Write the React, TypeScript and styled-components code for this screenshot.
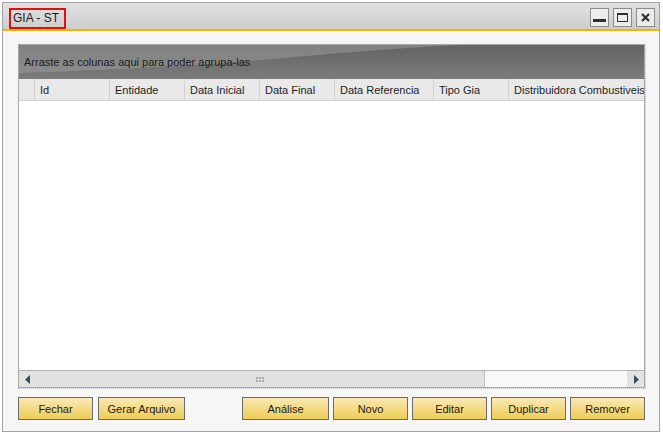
import React from "react";
import styled, { createGlobalStyle } from "styled-components";

const GlobalStyle = createGlobalStyle`
  html, body {
    margin: 0;
    padding: 0;
    background: #ffffff;
    font-family: "Liberation Sans", Arial, sans-serif;
    font-size: 11px;
    color: #1e1e1e;
  }
`;

interface Column {
  title: string;
  width: number;
}

const columns: Column[] = [
  { title: "Id", width: 75 },
  { title: "Entidade", width: 75 },
  { title: "Data Inicial", width: 75 },
  { title: "Data Final", width: 75 },
  { title: "Data Referencia", width: 99 },
  { title: "Tipo Gia", width: 75 },
  { title: "Distribuidora Combustiveis", width: 135 },
];

const leftButtons = [
  { label: "Fechar", width: 75 },
  { label: "Gerar Arquivo", width: 87 },
];

const rightButtons = [
  { label: "Análise", width: 87 },
  { label: "Novo", width: 75 },
  { label: "Editar", width: 75 },
  { label: "Duplicar", width: 75 },
  { label: "Remover", width: 75 },
];

export default function App() {
  return (
    <>
      <GlobalStyle />
      <Window>
        <TitleBar>
          <TitleBox>GIA - ST</TitleBox>
          <WindowControls>
            <ControlButton>
              <svg width="13" height="13" viewBox="0 0 13 13">
                <rect x="0" y="8" width="13" height="3" fill="#303030" />
              </svg>
            </ControlButton>
            <ControlButton>
              <svg width="13" height="13" viewBox="0 0 13 13">
                <rect x="1.5" y="2.5" width="10" height="8" fill="none" stroke="#303030" strokeWidth="1" />
                <rect x="1" y="2" width="11" height="2" fill="#303030" />
              </svg>
            </ControlButton>
            <ControlButton>
              <svg width="13" height="13" viewBox="0 0 13 13">
                <path d="M3 3 L10 10 M10 3 L3 10" stroke="#303030" strokeWidth="2.2" />
              </svg>
            </ControlButton>
          </WindowControls>
        </TitleBar>
        <AccentLine />
        <Body>
          <GridFrame>
            <Grid>
              <GroupPanel>
                <GroupWave viewBox="0 0 625 34" preserveAspectRatio="none">
                  <path d="M0 0 H440 C 360 4 300 10 230 16 C 150 22 60 26 0 28 Z" fill="#9a9a9a" opacity="0.55" />
                </GroupWave>
                <GroupText>Arraste as colunas aqui para poder agrupa-las</GroupText>
              </GroupPanel>
              <HeaderRow>
                <IndicatorCell />
                {columns.map((col) => (
                  <HeaderCell key={col.title} $width={col.width}>
                    {col.title}
                  </HeaderCell>
                ))}
              </HeaderRow>
              <Rows />
              <ScrollBar>
                <ArrowButton>
                  <svg width="6" height="9" viewBox="0 0 6 9">
                    <path d="M5 0 L0 4.5 L5 9 Z" fill="#3d4b59" />
                  </svg>
                </ArrowButton>
                <Thumb>
                  <svg width="9" height="5" viewBox="0 0 9 5">
                    {[0, 3, 6].map((x) =>
                      [0, 3].map((y) => (
                        <rect key={`${x}-${y}`} x={x} y={y} width="2" height="2" fill="#a8a8a8" />
                      ))
                    )}
                  </svg>
                </Thumb>
                <Track />
                <ArrowButton>
                  <svg width="6" height="9" viewBox="0 0 6 9">
                    <path d="M1 0 L6 4.5 L1 9 Z" fill="#3d4b59" />
                  </svg>
                </ArrowButton>
              </ScrollBar>
            </Grid>
          </GridFrame>
          <ButtonRow>
            <ButtonGroup $gap={5}>
              {leftButtons.map((b) => (
                <ActionButton key={b.label} $width={b.width}>
                  {b.label}
                </ActionButton>
              ))}
            </ButtonGroup>
            <ButtonGroup $gap={4}>
              {rightButtons.map((b) => (
                <ActionButton key={b.label} $width={b.width}>
                  {b.label}
                </ActionButton>
              ))}
            </ButtonGroup>
          </ButtonRow>
        </Body>
      </Window>
    </>
  );
}

const Window = styled.div`
  margin: 2px 0 0 2px;
  width: 658px;
  height: 430px;
  box-sizing: border-box;
  border: 1px solid #a2a2a2;
  display: flex;
  flex-direction: column;
  background: #f6f6f6;
`;

const TitleBar = styled.div`
  height: 26px;
  display: flex;
  align-items: center;
  justify-content: space-between;
  padding: 0 4px 0 6px;
  background: linear-gradient(to bottom, #e2e2e2, #cdcdcd);
`;

const TitleBox = styled.div`
  box-sizing: border-box;
  height: 21px;
  width: 57px;
  margin-top: 4px;
  border: 2px solid #e01010;
  font-size: 12px;
  line-height: 17px;
  padding-left: 2px;
  color: #1a1a1a;
  white-space: nowrap;
`;

const WindowControls = styled.div`
  display: flex;
  gap: 4px;
  margin-top: 3px;
`;

const ControlButton = styled.div`
  width: 19px;
  height: 19px;
  box-sizing: border-box;
  border: 1px solid #8c8c8c;
  background: #ececec;
  display: flex;
  align-items: center;
  justify-content: center;
`;

const AccentLine = styled.div`
  height: 2px;
  background: #f5b400;
`;

const Body = styled.div`
  flex: 1;
  display: flex;
  flex-direction: column;
  padding: 13px 13px 0 15px;
  background: #f6f6f6;
`;

const GridFrame = styled.div`
  height: 345px;
  box-sizing: border-box;
  border-right: 1px dotted #bcbcbc;
  border-bottom: 1px dotted #bcbcbc;
  display: flex;
`;

const Grid = styled.div`
  flex: 1;
  display: flex;
  flex-direction: column;
  box-sizing: border-box;
  border: 1px solid #a8a8a8;
  background: #ffffff;
`;

const GroupPanel = styled.div`
  position: relative;
  height: 34px;
  background: linear-gradient(to bottom, #636363, #7c7c7c);
  display: flex;
  align-items: center;
  overflow: hidden;
`;

const GroupWave = styled.svg`
  position: absolute;
  left: 0;
  top: 0;
  width: 100%;
  height: 100%;
`;

const GroupText = styled.span`
  position: relative;
  margin: 0 0 0 5px;
  color: #1c1c1c;
  font-size: 11px;
`;

const HeaderRow = styled.div`
  height: 22px;
  display: flex;
  background: #e9e9e9;
  border-bottom: 1px solid #d2d2d2;
  box-sizing: border-box;
`;

const IndicatorCell = styled.div`
  width: 16px;
  border-right: 1px solid #d2d2d2;
  box-sizing: border-box;
`;

const HeaderCell = styled.div<{ $width: number }>`
  width: ${(p) => p.$width}px;
  box-sizing: border-box;
  border-right: 1px solid #d2d2d2;
  padding-left: 5px;
  line-height: 22px;
  white-space: nowrap;
  overflow: hidden;
  color: #1e1e1e;
  &:last-child {
    border-right: none;
  }
`;

const Rows = styled.div`
  flex: 1;
  background: #ffffff;
`;

const ScrollBar = styled.div`
  height: 17px;
  display: flex;
  box-sizing: border-box;
  border-top: 1px solid #b4b4b4;
  background: #f8f8f8;
`;

const ArrowButton = styled.div`
  width: 17px;
  display: flex;
  align-items: center;
  justify-content: center;
  background: #e2e2e2;
`;

const Thumb = styled.div`
  width: 449px;
  display: flex;
  align-items: center;
  justify-content: center;
  background: #e1e1e1;
  border-right: 1px solid #bdbdbd;
  box-sizing: border-box;
`;

const Track = styled.div`
  flex: 1;
  background: #f8f8f8;
`;

const ButtonRow = styled.div`
  margin-top: 8px;
  display: flex;
  justify-content: space-between;
  padding-right: 1px;
`;

const ButtonGroup = styled.div<{ $gap: number }>`
  display: flex;
  gap: ${(p) => p.$gap}px;
`;

const ActionButton = styled.div<{ $width: number }>`
  width: ${(p) => p.$width}px;
  height: 23px;
  box-sizing: border-box;
  border: 1px solid #6c6c6c;
  background: linear-gradient(to bottom, #f8e9b8, #f0cd55);
  display: flex;
  align-items: center;
  justify-content: center;
  font-size: 11px;
  color: #1a1a1a;
`;
